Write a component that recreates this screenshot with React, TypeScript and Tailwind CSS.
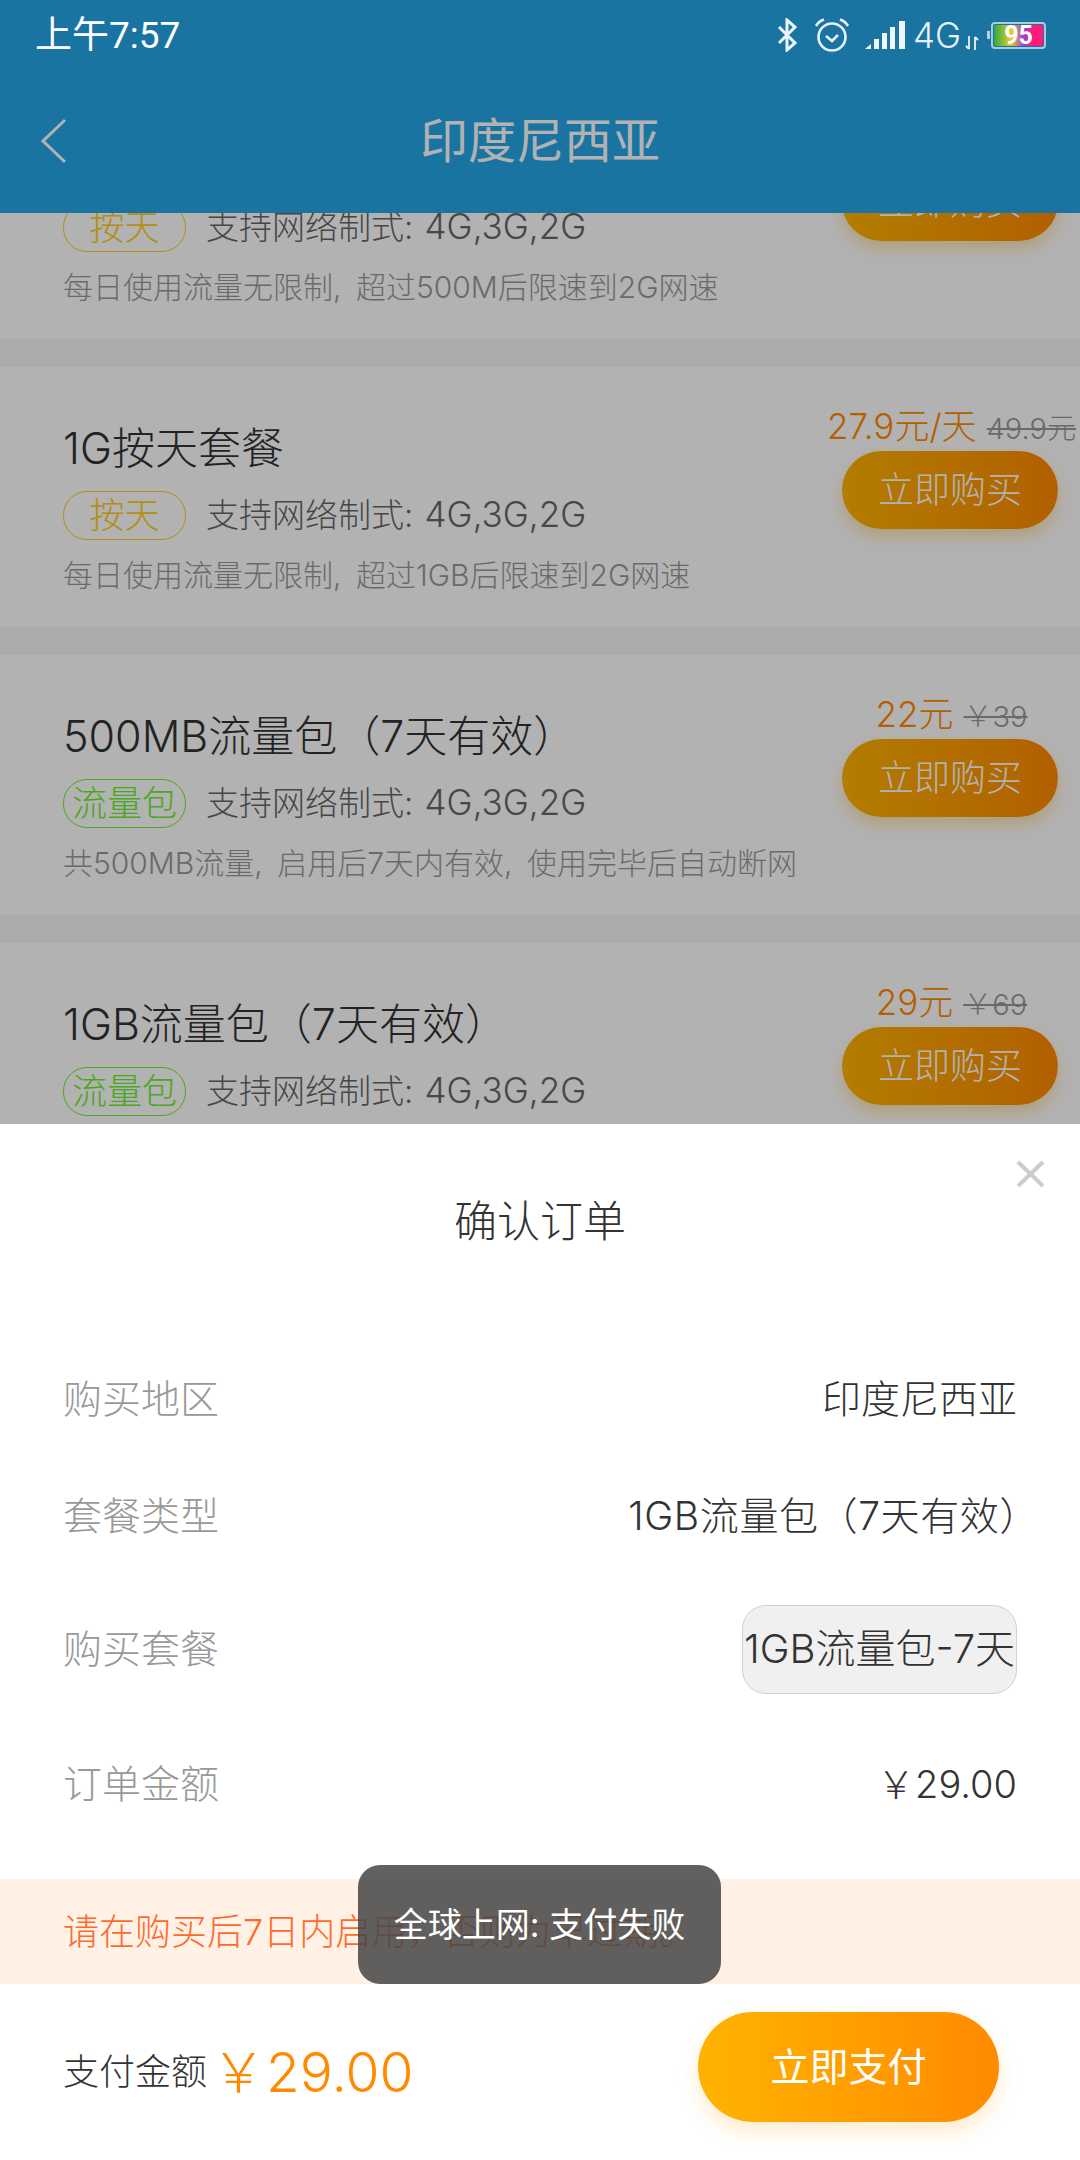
import React from "react";

function Buy() {
  return (
    <div className="w-[216px] h-[78px] rounded-[39px] bg-gradient-to-r from-[#ffb300] to-[#ff8a00] shadow-[0_8px_16px_rgba(255,160,0,0.3)] flex items-center justify-center text-white text-[36px] font-light">
      立即购买
    </div>
  );
}

function Tag({ text, kind }: { text: string; kind: "day" | "flow" }) {
  return (
    <div
      className={
        "w-[123px] h-[49px] rounded-[24px] border flex items-center justify-center whitespace-nowrap text-[35px] font-light " +
        (kind === "day" ? "border-[#ffcc1a] text-[#ffcc1a]" : "border-[#6ef02c] text-[#6ef02c]")
      }
    >
      {text}
    </div>
  );
}

function Card({
  title,
  tag,
  kind,
  desc,
  price,
  old,
}: {
  title: string;
  tag: string;
  kind: "day" | "flow";
  desc: string;
  price: string;
  old: string;
}) {
  return (
    <div className="relative h-[260px] bg-white mb-[28px] pl-[63px] pt-[51px] shrink-0">
      <div className="text-[43px] leading-[60px] text-[#333] font-light whitespace-nowrap">{title}</div>
      <div className="mt-[12px] flex items-center gap-[20px]">
        <Tag text={tag} kind={kind} />
        <div className="text-[33px] leading-[49px] text-[#666] font-light whitespace-nowrap">
          支持网络制式: <span className="ml-[2px] text-[35px]">4G,3G,2G</span>
        </div>
      </div>
      <div className="mt-[14px] text-[30px] leading-[42px] text-[#999] font-light whitespace-nowrap [word-spacing:6px]">{desc}</div>
      <div className="absolute right-[22px] top-[37px] w-[216px] flex flex-col items-center">
        <div className="flex items-baseline justify-center gap-[10px] whitespace-nowrap ml-[3px]">
          <span className="text-[35px] leading-[44px] text-[#ff8a00] font-light">{price}</span>
          <span className="text-[29px] leading-[44px] text-[#999] line-through font-light">{old}</span>
        </div>
        <Buy />
      </div>
    </div>
  );
}

function OrderRow({ label, children, h }: { label: string; children: React.ReactNode; h: string }) {
  return (
    <div className={"flex items-center justify-between px-[63px] " + h}>
      <span className="text-[39px] text-[#999] font-light">{label}</span>
      <div className="text-[39px] text-[#333] font-light whitespace-nowrap">{children}</div>
    </div>
  );
}

function StatusIcons() {
  return (
    <div className="flex items-center text-white -mt-[2px]">
      <svg width="21" height="34" viewBox="0 0 21 34" fill="none" stroke="#eef4f8" strokeWidth="3" className="mr-[16px]">
        <path d="M2 9 L18 25 L10 32 V2 L18 9 L2 25" />
      </svg>
      <svg width="36" height="34" viewBox="0 0 36 34" fill="none" stroke="#e8f0f5" strokeWidth="2.6" className="mr-[15px]">
        <circle cx="18" cy="19" r="13.5" />
        <path d="M12 18 L18 23 L24 17" />
        <path d="M2 8 Q5 3 10 1.5 M34 8 Q31 3 26 1.5" />
      </svg>
      <svg width="40" height="30" viewBox="0 0 40 30" fill="#eef4f8" className="mr-[8px]">
        <path d="M0 29 L6 24 V29 Z" />
        <rect x="9" y="19" width="5" height="10" />
        <rect x="17" y="13" width="5" height="16" />
        <rect x="25" y="7" width="5" height="22" />
        <rect x="34" y="1" width="6" height="28" />
      </svg>
      <span className="text-[35px] leading-[34px] text-[#e8f0f5] font-light">4G</span>
      <svg width="14" height="16" viewBox="0 0 14 16" fill="none" stroke="#eef4f8" strokeWidth="1.8" className="ml-[4px] mt-[16px] mr-[8px]">
        <path d="M4 1 V14 M1 11 L4 14 M10 15 V2 M13 5 L10 2" />
      </svg>
      <div className="w-[3px] h-[8px] bg-[#b6d3e2] mr-[1px]" />
      <div className="w-[55px] h-[27px] rounded-[4px] border-2 border-[#a9cbdc] p-[1px] flex">
        <div className="flex-1 rounded-[1px] bg-[linear-gradient(90deg,#2aa84a_0%,#e8d020_35%,#9a40e0_60%,#ff1a7a_78%,#ff1a7a_100%)] flex items-center justify-center text-[25px] leading-none font-bold text-white font-['Roboto',sans-serif]">
          95
        </div>
      </div>
    </div>
  );
}

export default function App() {
  return (
    <div className="relative w-[1080px] h-[2160px] overflow-hidden bg-[#f7f7f7] font-['Inter','Noto_Sans_CJK_SC',sans-serif]">
      <div className="relative z-0 flex flex-col h-[2160px] overflow-hidden">
        <div className="h-[213px] shrink-0 relative z-10 bg-[#25a7e9] flex items-end">
          <div className="relative w-full h-[72px] mb-[36px] flex items-center justify-center">
            <svg width="28" height="46" viewBox="0 0 28 46" fill="none" stroke="#fff" strokeWidth="3" className="absolute left-[40px] top-[13px]">
              <path d="M25 2 L3 23 L25 44" />
            </svg>
            <span className="text-[48px] text-white">印度尼西亚</span>
          </div>
        </div>
        <div className="-mt-[134px] flex flex-col">
          <Card title="500M按天套餐" tag="按天" kind="day" desc="每日使用流量无限制, 超过500M后限速到2G网速" price="27.9元/天" old="49.9元" />
          <Card title="1G按天套餐" tag="按天" kind="day" desc="每日使用流量无限制, 超过1GB后限速到2G网速" price="27.9元/天" old="49.9元" />
          <Card title="500MB流量包（7天有效）" tag="流量包" kind="flow" desc="共500MB流量, 启用后7天内有效, 使用完毕后自动断网" price="22元" old="￥39" />
          <Card title="1GB流量包（7天有效）" tag="流量包" kind="flow" desc="共1GB流量, 启用后7天内有效, 使用完毕后自动断网" price="29元" old="￥69" />
        </div>
      </div>

      <div className="absolute inset-0 z-10 bg-black/30" />

      <div className="absolute z-20 top-0 left-0 right-0 h-[72px] flex items-center justify-between pl-[35px] pr-[34px]">
        <span className="text-[37px] text-white font-['Roboto','Noto_Sans_CJK_SC',sans-serif]">上午7:57</span>
        <StatusIcons />
      </div>

      <div className="absolute z-20 left-0 right-0 bottom-0 h-[1036px] bg-white flex flex-col">
        <div className="relative h-[217px] shrink-0 pt-[67px] text-center text-[43px] text-[#333] font-light leading-[60px]">
          确认订单
          <svg width="29" height="28" viewBox="0 0 29 28" stroke="#ccc" strokeWidth="4" className="absolute right-[35px] top-[36px]">
            <path d="M2 2 L27 26 M27 2 L2 26" />
          </svg>
        </div>
        <OrderRow label="购买地区" h="h-[117px]">印度尼西亚</OrderRow>
        <OrderRow label="套餐类型" h="h-[117px]">
          <div className="-mr-[22px] tracking-[0.6px]">1GB流量包（7天有效）</div>
        </OrderRow>
        <OrderRow label="购买套餐" h="h-[148px]">
          <div className="w-[275px] h-[89px] rounded-[24px] border border-[#d0d0d0] bg-[#f0f0f0] flex items-center justify-center text-[40px] text-[#333] whitespace-nowrap">
            1GB流量包-7天
          </div>
        </OrderRow>
        <OrderRow label="订单金额" h="h-[122px]">
          <span className="text-[38px]">￥29.00</span>
        </OrderRow>
        <div className="mt-[34px] h-[105px] shrink-0 bg-[#fff1e6] flex items-center pl-[63px] text-[36px] text-[#ff6a2b] font-light whitespace-nowrap">
          请在购买后7日内启用，否则为早过期。
        </div>
        <div className="flex-1 flex items-start justify-between pt-[28px] pl-[63px] pr-[81px]">
          <div className="mt-[5px] h-[110px] flex items-center gap-[4px]">
            <span className="text-[36px] text-[#333] font-light">支付金额</span>
            <span className="text-[55px] text-[#ff8a00] font-light">￥29.00</span>
          </div>
          <div className="w-[301px] h-[110px] rounded-[55px] bg-gradient-to-r from-[#ffb300] to-[#ff8a00] shadow-[0_10px_20px_rgba(255,160,0,0.2)] flex items-center justify-center text-[39px] text-white">
            立即支付
          </div>
        </div>
      </div>

      <div className="absolute z-30 left-[358px] top-[1865px] w-[363px] h-[119px] rounded-[22px] bg-[rgba(69,69,69,0.85)] flex items-center justify-center text-[34px] text-white whitespace-nowrap">
        全球上网: 支付失败
      </div>
    </div>
  );
}
